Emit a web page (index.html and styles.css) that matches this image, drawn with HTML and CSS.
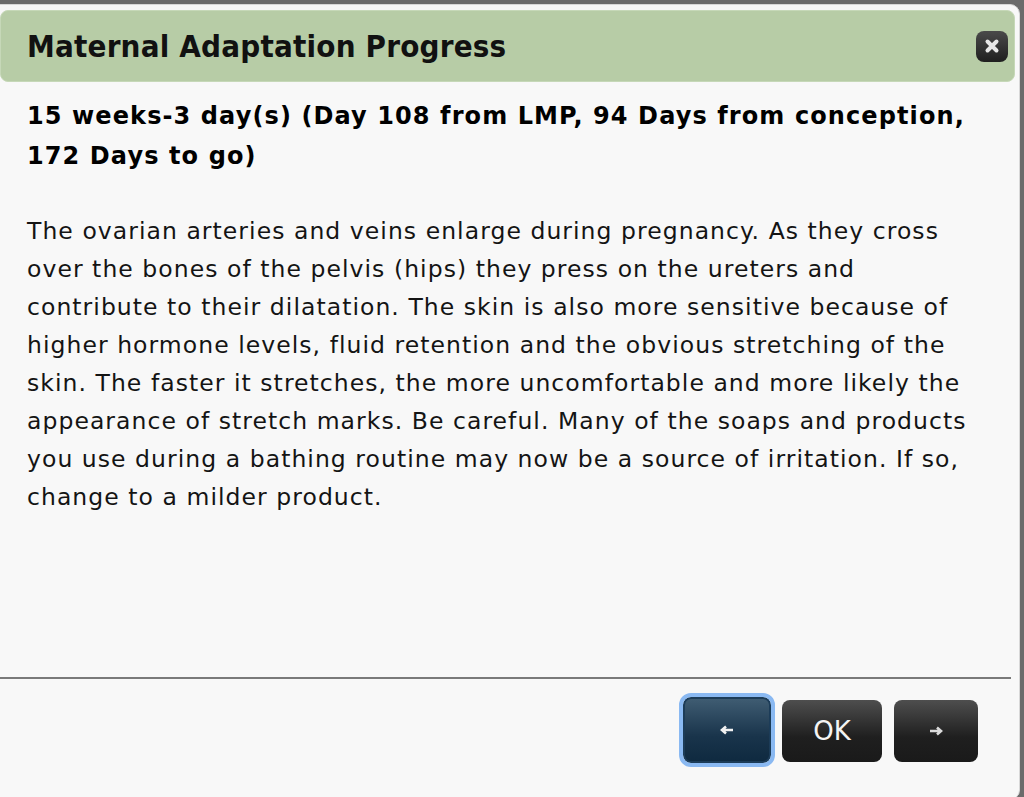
FILE: index.html
```html
<!DOCTYPE html>
<html>
<head>
<meta charset="utf-8">
<link rel="stylesheet" href="styles.css">
</head>
<body>
<div class="dialog">
  <div class="titlebar">
    <h1 class="title">Maternal Adaptation Progress</h1>
    <button class="close" aria-label="close">
      <svg width="16" height="16" viewBox="0 0 16 16"><path d="M3.5 3.5 L12.5 12.5 M12.5 3.5 L3.5 12.5" stroke="#e6e6e6" stroke-width="4" stroke-linecap="round"/></svg>
    </button>
  </div>
  <div class="content">
    <p class="when">15 weeks-3 day(s) (Day 108 from LMP, 94 Days from conception, 172 Days to go)</p>
    <p class="text">The ovarian arteries and veins enlarge during pregnancy. As they cross over the bones of the pelvis (hips) they press on the ureters and contribute to their dilatation. The skin is also more sensitive because of higher hormone levels, fluid retention and the obvious stretching of the skin. The faster it stretches, the more uncomfortable and more likely the appearance of stretch marks. Be careful. Many of the soaps and products you use during a bathing routine may now be a source of irritation. If so, change to a milder product.</p>
  </div>
  <div class="footer">
    <button class="btn btn-prev">
      <svg width="14" height="10" viewBox="0 0 14 10"><path d="M13 5 H4 M6 1.5 L2 5 L6 8.5" stroke="#f2f2f2" stroke-width="2.6" fill="none" stroke-linejoin="miter"/></svg>
    </button>
    <button class="btn btn-ok">OK</button>
    <button class="btn btn-next">
      <svg width="14" height="10" viewBox="0 0 14 10"><path d="M1 5 H10 M8 1.5 L12 5 L8 8.5" stroke="#dcdcdc" stroke-width="2.6" fill="none" stroke-linejoin="miter"/></svg>
    </button>
  </div>
</div>
</body>
</html>
```
FILE: styles.css
```css
html, body {
  margin: 0;
  padding: 0;
  height: 100%;
  overflow: hidden;
}
body {
  background: #6b6b6b;
  font-family: "DejaVu Sans", Verdana, sans-serif;
  color: #111;
}
.dialog {
  box-sizing: border-box;
  margin: 4px 0 0 -10px;
  width: 1030px;
  height: 796px;
  background: #f8f8f8;
  border: 1px solid #d8d8d8;
  border-radius: 10px;
  padding: 5px 4px 0 9px;
  display: flex;
  flex-direction: column;
}
.titlebar {
  height: 70px;
  background: #b7cca6;
  border-radius: 8px;
  display: flex;
  align-items: center;
  justify-content: space-between;
  padding: 0 6px 0 26px;
  border: 1px solid #c6d8b8;
}
.title {
  margin: 0;
  font-family: "DejaVu Sans Condensed", "DejaVu Sans", sans-serif;
  font-weight: bold;
  font-size: 31px;
  color: #111;
  letter-spacing: 0.2px;
}
.close {
  width: 32px;
  height: 31px;
  border: none;
  border-radius: 8px;
  background: linear-gradient(#4a4a4a, #1f1f1f);
  padding: 0;
  display: flex;
  align-items: center;
  justify-content: center;
}
.content {
  flex: 1;
  padding: 0 26px 0 27px;
}
.when {
  margin: 14px 0 0;
  font-weight: bold;
  font-size: 24px;
  letter-spacing: 1.1px;
  line-height: 40px;
  color: #000;
}
.text {
  margin: 36px 0 0;
  font-size: 23.5px;
  letter-spacing: 1.05px;
  line-height: 38px;
  color: #141414;
}
.footer {
  box-sizing: border-box;
  height: 122px;
  border-top: 2px solid #7a7a7a;
  margin-left: -10px;
  margin-right: 4px;
  display: flex;
  align-items: flex-start;
  padding: 21px 33px 0 0;
  justify-content: flex-end;
  gap: 12px;
}
.btn {
  height: 62px;
  border: none;
  border-radius: 8px;
  background: linear-gradient(#4e4e4e, #1f1f1f 60%, #1a1a1a);
  color: #f4f4f4;
  font-family: "DejaVu Sans", sans-serif;
  font-size: 26px;
  display: flex;
  align-items: center;
  justify-content: center;
  padding: 0;
}
.btn-prev {
  width: 88px;
  height: 66px;
  margin-top: -3px;
  margin-right: -1px;
  background: linear-gradient(#3f5c72, #19344b 60%, #0f2a40);
  border: 2px solid #1c3c58;
  outline: 4px solid #8ab9f2;
  outline-offset: 0;
}
.btn-ok {
  width: 100px;
}
.btn-next {
  width: 84px;
}
```
